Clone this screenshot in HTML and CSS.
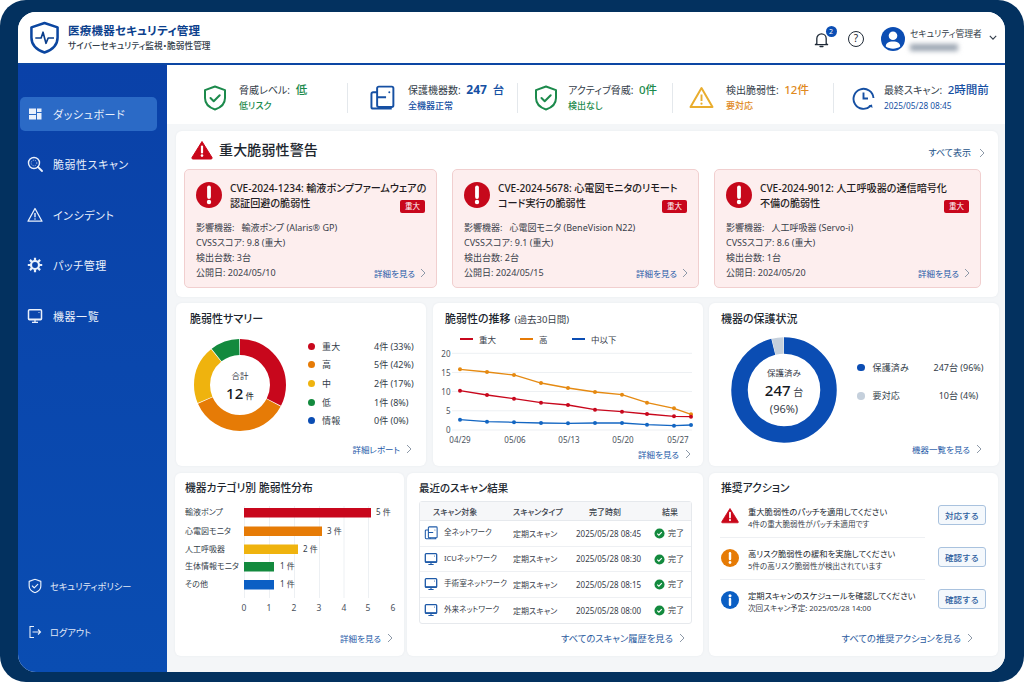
FILE: index.html
```html
<!DOCTYPE html>
<html lang="ja">
<head>
<meta charset="utf-8">
<title>医療機器セキュリティ管理</title>
<link rel="stylesheet" href="styles.css">
</head>
<body>
<svg class="defs" width="0" height="0">
  <defs>
    <symbol id="chev" viewBox="0 0 8 10"><path d="M2 1l4 4-4 4" fill="none" stroke="#8d99a8" stroke-width="1"/></symbol>
    <symbol id="shield-ok" viewBox="0 0 24 26"><path d="M12 1.500l10 3.600v8c0 5.800-4.200 9.600-10 11.400C6.200 22.700 2 18.900 2 13.100V5.100z" fill="none" stroke="currentColor" stroke-width="2" stroke-linejoin="round"/><path d="M7.500 13l3.200 3.200 6-6" fill="none" stroke="currentColor" stroke-width="2" stroke-linecap="round" stroke-linejoin="round"/></symbol>
    <symbol id="monitor" viewBox="0 0 16 16"><rect x="1.500" y="1.800" width="13" height="10" rx="1" fill="none" stroke="currentColor" stroke-width="1.500"/><path d="M2 10.500h12v1.500H2z" fill="currentColor"/><path d="M5 14.300h6M8 12v2" stroke="currentColor" stroke-width="1.300"/><circle cx="12" cy="4.500" r=".6" fill="currentColor"/></symbol>
    <symbol id="devices" viewBox="0 0 16 16"><rect x="5" y="1" width="10" height="12.500" rx="1" fill="none" stroke="currentColor" stroke-width="1.200"/><path d="M5 4.500H2.500a1 1 0 0 0-1 1v8a1 1 0 0 0 1 1h11.500M5 7.500h5.500M7 14.500v-1M13 14.500v-1" fill="none" stroke="currentColor" stroke-width="1.200"/><circle cx="12.500" cy="4.500" r=".6" fill="currentColor"/></symbol>
    <symbol id="done" viewBox="0 0 12 12"><circle cx="6" cy="6" r="5.500" fill="#138a3e"/><path d="M3.500 6.200l1.800 1.700 3.200-3.400" fill="none" stroke="#fff" stroke-width="1.200"/></symbol>
    <symbol id="tri-red" viewBox="0 0 22 20"><path d="M11 1.500L21 17.500a1.100 1.100 0 0 1-1 1.500H2a1.100 1.100 0 0 1-1-1.500z" fill="#c9071a" stroke="#c9071a" stroke-linejoin="round"/><path d="M11 6.500v6" stroke="#fff" stroke-width="2.200" stroke-linecap="round"/><circle cx="11" cy="15.600" r="1.300" fill="#fff"/></symbol>
    <symbol id="alert-circle" viewBox="0 0 26 26"><circle cx="13" cy="13" r="13" fill="#c6081b"/><path d="M13 5.500v9.500" stroke="#fff" stroke-width="3.800" stroke-linecap="round"/><circle cx="13" cy="20" r="2.200" fill="#fff"/></symbol>
  </defs>
</svg>
<div class="frame">
  <div class="app">
    <header class="topbar">
      <div class="brand">
        <svg class="logo" viewBox="0 0 32 34" width="31" height="33"><path d="M16 2l13.500 4.500v10.500c0 7.500-5.500 12.800-13.500 15.500C8 29.800 2.500 24.500 2.500 17V6.500z" fill="#fff" stroke="#0b46a0" stroke-width="2.600" stroke-linejoin="round"/><path d="M6.500 17.500h6l2-6 3 11.500 2.300-5.500h6" fill="none" stroke="#0b3f8c" stroke-width="1.700" stroke-linejoin="round"/></svg>
        <div>
          <div class="brand-title">医療機器セキュリティ管理</div>
          <div class="brand-sub">サイバーセキュリティ監視・脆弱性管理</div>
        </div>
      </div>
      <div class="top-tools">
        <div class="bell">
          <svg viewBox="0 0 16 18" width="15" height="17"><path d="M3 13.500V8a5 5 0 0 1 10 0v5.500l1.500 1H1.500z" fill="none" stroke="#1f2a37" stroke-width="1.400" stroke-linejoin="round"/><path d="M6.500 16.500h3" stroke="#1f2a37" stroke-width="1.500" stroke-linecap="round"/></svg>
          <span class="badge-num">2</span>
        </div>
        <div class="help">?</div>
        <svg class="avatar" viewBox="0 0 24 24" width="24" height="24"><circle cx="12" cy="12" r="12" fill="#0b4db3"/><circle cx="12" cy="8.800" r="4.300" fill="#fff"/><path d="M4.800 19.500c0-3.300 2.600-5 7.200-5s7.200 1.700 7.200 5c-2 1.400-4.500 2.200-7.200 2.200s-5.200-.8-7.200-2.200z" fill="#fff"/></svg>
        <div class="user">
          <div class="user-name">セキュリティ管理者</div>
          <div class="user-blur"></div>
        </div>
        <svg class="caret" viewBox="0 0 10 6" width="8" height="5"><path d="M1 1l4 4 4-4" fill="none" stroke="#333d4a" stroke-width="1.400"/></svg>
      </div>
    </header>
    <div class="body">
      <aside class="sidebar">
        <nav class="nav">
          <a class="nav-item active">
            <svg class="nav-icon" viewBox="0 0 16 16"><path d="M2 2.500h7v5.500H2zM10 2.500h4.500v3.500H10zM10 7h4.500v6.500H10zM2 9h7v4.500H2z" fill="#e9f0fb"/></svg>
            <span>ダッシュボード</span>
          </a>
          <a class="nav-item">
            <svg class="nav-icon" viewBox="0 0 16 16"><circle cx="7" cy="7" r="5.500" fill="none" stroke="#e9f0fb" stroke-width="1.400"/><path d="M11 11l4 4" stroke="#e9f0fb" stroke-width="1.800" stroke-linecap="round"/><circle cx="7" cy="7" r="2.800" fill="none" stroke="#e9f0fb" stroke-width=".7" stroke-dasharray="1 1"/></svg>
            <span>脆弱性スキャン</span>
          </a>
          <a class="nav-item">
            <svg class="nav-icon" viewBox="0 0 16 16"><path d="M8 1.500L15 14.200H1z" fill="none" stroke="#e9f0fb" stroke-width="1.300" stroke-linejoin="round"/><path d="M8 6v4.200" stroke="#e9f0fb" stroke-width="1.400"/><circle cx="8" cy="12" r=".8" fill="#e9f0fb"/></svg>
            <span>インシデント</span>
          </a>
          <a class="nav-item">
            <svg class="nav-icon" viewBox="0 0 16 16"><circle cx="8" cy="8" r="4" fill="none" stroke="#e9f0fb" stroke-width="2.200"/><path d="M8 .8v3M8 12.200v3M.8 8h3M12.200 8h3M2.900 2.900L5 5M11 11l2.100 2.100M13.100 2.900L11 5M5 11l-2.100 2.100" stroke="#e9f0fb" stroke-width="2.200"/></svg>
            <span>パッチ管理</span>
          </a>
          <a class="nav-item">
            <svg class="nav-icon" viewBox="0 0 16 16"><use href="#monitor" class="nav-use"/></svg>
            <span>機器一覧</span>
          </a>
        </nav>
        <div class="side-foot">
          <a class="foot-item">
            <svg class="foot-icon" viewBox="0 0 24 26"><use href="#shield-ok" class="nav-use"/></svg>
            <span>セキュリティポリシー</span>
          </a>
          <a class="foot-item">
            <svg class="foot-icon" viewBox="0 0 14 14"><path d="M6 1.500H2v11h4" fill="none" stroke="#e9f0fb" stroke-width="1.100"/><path d="M4.500 7h8M10 4.500L12.500 7 10 9.500" fill="none" stroke="#e9f0fb" stroke-width="1.100"/></svg>
            <span>ログアウト</span>
          </a>
        </div>
      </aside>
      <main class="main">
        <section class="stats">
          <div class="stat s1">
            <svg class="stat-icon green" width="24" height="26"><use href="#shield-ok"/></svg>
            <div><div class="stat-line">脅威レベル: <b class="green">低</b></div><div class="stat-sub green">低リスク</div></div>
          </div>
          <div class="stat s2">
            <svg class="stat-icon blue" width="26" height="26" viewBox="0 0 16 16"><use href="#devices"/></svg>
            <div><div class="stat-line">保護機器数: <b class="blue big">247</b><b class="blue"> 台</b></div><div class="stat-sub blue">全機器正常</div></div>
          </div>
          <div class="stat s3">
            <svg class="stat-icon green" width="24" height="26"><use href="#shield-ok"/></svg>
            <div><div class="stat-line">アクティブ脅威: <b class="green">0件</b></div><div class="stat-sub green">検出なし</div></div>
          </div>
          <div class="stat s4">
            <svg class="stat-icon" width="25" height="23" viewBox="0 0 25 23"><path d="M12.500 2L23.500 21H1.500z" fill="none" stroke="#e9ad2e" stroke-width="2" stroke-linejoin="round"/><path d="M12.500 8.500v6.500" stroke="#e9ad2e" stroke-width="1.900"/><circle cx="12.500" cy="17.700" r="1.100" fill="#e9ad2e"/></svg>
            <div><div class="stat-line">検出脆弱性: <b class="orange">12件</b></div><div class="stat-sub orange">要対応</div></div>
          </div>
          <div class="stat s5">
            <svg class="stat-icon blue" width="23" height="24" viewBox="0 0 23 24"><path d="M18.500 20A10 10 0 1 1 21.500 12" fill="none" stroke="currentColor" stroke-width="1.900"/><path d="M11.500 6.500v6h4.500" fill="none" stroke="currentColor" stroke-width="1.900"/><path d="M16.500 19.500l3.500-1 .5 3.500z" fill="currentColor"/></svg>
            <div><div class="stat-line">最終スキャン: <b class="blue">2時間前</b></div><div class="stat-sub blue regular">2025/05/28 08:45</div></div>
          </div>
        </section>
        <div class="content">
          <section class="card alerts">
            <div class="alerts-head">
              <svg width="22" height="20"><use href="#tri-red"/></svg>
              <h2>重大脆弱性警告</h2>
              <a class="link all">すべて表示<svg width="8" height="10"><use href="#chev"/></svg></a>
            </div>
            <div class="alert-grid">
              <article class="alert">
                <div class="alert-top">
                  <svg width="26" height="26"><use href="#alert-circle"/></svg>
                  <h3>CVE-2024-1234: 輸液ポンプファームウェアの<br>認証回避の脆弱性</h3>
                  <span class="sev">重大</span>
                </div>
                <p class="gap">影響機器:&nbsp;&nbsp;&nbsp;輸液ポンプ (Alaris® GP)</p>
                <p>CVSSスコア: 9.8 (重大)</p>
                <p>検出台数: 3台</p>
                <div class="alert-last"><p>公開日: 2024/05/10</p><a class="link">詳細を見る<svg width="8" height="10"><use href="#chev"/></svg></a></div>
              </article>
              <article class="alert">
                <div class="alert-top">
                  <svg width="26" height="26"><use href="#alert-circle"/></svg>
                  <h3>CVE-2024-5678: 心電図モニタのリモート<br>コード実行の脆弱性</h3>
                  <span class="sev">重大</span>
                </div>
                <p class="gap">影響機器:&nbsp;&nbsp;&nbsp;心電図モニタ (BeneVision N22)</p>
                <p>CVSSスコア: 9.1 (重大)</p>
                <p>検出台数: 2台</p>
                <div class="alert-last"><p>公開日: 2024/05/15</p><a class="link">詳細を見る<svg width="8" height="10"><use href="#chev"/></svg></a></div>
              </article>
              <article class="alert">
                <div class="alert-top">
                  <svg width="26" height="26"><use href="#alert-circle"/></svg>
                  <h3>CVE-2024-9012: 人工呼吸器の通信暗号化<br>不備の脆弱性</h3>
                  <span class="sev">重大</span>
                </div>
                <p class="gap">影響機器:&nbsp;&nbsp;&nbsp;人工呼吸器 (Servo-i)</p>
                <p>CVSSスコア: 8.6 (重大)</p>
                <p>検出台数: 1台</p>
                <div class="alert-last"><p>公開日: 2024/05/20</p><a class="link">詳細を見る<svg width="8" height="10"><use href="#chev"/></svg></a></div>
              </article>
            </div>
          </section>

          <div class="row row2">
            <section class="card panel">
              <h2 class="panel-title">脆弱性サマリー</h2>
              <div class="summary">
                <svg class="donut" viewBox="0 0 92 92" width="92" height="92">
                  <g fill="none" stroke-width="16" transform="rotate(-90 46 46)">
                    <circle cx="46" cy="46" r="38" pathLength="360" stroke="#c8071c" stroke-dasharray="117 243"/>
                    <circle cx="46" cy="46" r="38" pathLength="360" stroke="#e67b06" stroke-dasharray="128 232" stroke-dashoffset="-118"/>
                    <circle cx="46" cy="46" r="38" pathLength="360" stroke="#efb30e" stroke-dasharray="74 286" stroke-dashoffset="-247"/>
                    <circle cx="46" cy="46" r="38" pathLength="360" stroke="#138a3e" stroke-dasharray="37 323" stroke-dashoffset="-322"/>
                  </g>
                  <text x="46" y="40" class="d-small" text-anchor="middle">合計</text>
                  <text x="46" y="60" class="d-big" text-anchor="middle">12<tspan class="d-unit"> 件</tspan></text>
                </svg>
                <ul class="legend">
                  <li><i class="dot c-red"></i><span>重大</span><em>4件 (33%)</em></li>
                  <li><i class="dot c-orange"></i><span>高</span><em>5件 (42%)</em></li>
                  <li><i class="dot c-yellow"></i><span>中</span><em>2件 (17%)</em></li>
                  <li><i class="dot c-green"></i><span>低</span><em>1件 (8%)</em></li>
                  <li><i class="dot c-blue"></i><span>情報</span><em>0件 (0%)</em></li>
                </ul>
              </div>
              <a class="link foot f-summary">詳細レポート<svg width="8" height="10"><use href="#chev"/></svg></a>
            </section>

            <section class="card panel trend">
              <h2 class="panel-title">脆弱性の推移<small>(過去30日間)</small></h2>
              <div class="line-legend">
                <span><i class="swatch c-red"></i>重大</span>
                <span><i class="swatch c-orange"></i>高</span>
                <span><i class="swatch c-blue"></i>中以下</span>
              </div>
              <svg class="linechart" viewBox="0 0 250 96" width="250" height="96">
                <g class="grid-lines"><path d="M14 3.300H254M14 22.500H254M14 41.500H254M14 60.800H254M14 80H254"/></g>
                <g class="axis-text">
                  <text x="12.500" y="6.500" text-anchor="end">20</text><text x="12.500" y="25.500" text-anchor="end">15</text><text x="12.500" y="44.500" text-anchor="end">10</text><text x="12.500" y="64" text-anchor="end">5</text><text x="12.500" y="83" text-anchor="end">0</text>
                  <text x="22" y="93" text-anchor="middle">04/29</text><text x="77" y="93" text-anchor="middle">05/06</text><text x="131" y="93" text-anchor="middle">05/13</text><text x="185" y="93" text-anchor="middle">05/20</text><text x="240" y="93" text-anchor="middle">05/27</text>
                </g>
                <g fill="none" stroke-width="1.300">
                  <polyline stroke="#e58a12" points="22,19.300 49,22 76,25 103,33 130,38 157,42 184,44.700 209,52.700 236,58.300 253,64.300"/>
                  <polyline stroke="#c8071c" points="22,40.700 49,45 76,48.700 103,52.700 130,55 157,59.700 184,61.700 209,64 236,66.300 253,66.700"/>
                  <polyline stroke="#1366c2" points="22,69.700 49,71.700 76,72.300 103,73 130,73.300 157,73 184,73 209,74.700 236,75.700 253,75"/>
                </g>
                <g fill="#e58a12"><circle cx="22" cy="19.300" r="2"/><circle cx="49" cy="22" r="2"/><circle cx="76" cy="25" r="2"/><circle cx="103" cy="33" r="2"/><circle cx="130" cy="38" r="2"/><circle cx="157" cy="42" r="2"/><circle cx="184" cy="44.700" r="2"/><circle cx="209" cy="52.700" r="2"/><circle cx="236" cy="58.300" r="2"/><circle cx="253" cy="64.300" r="2"/></g>
                <g fill="#c8071c"><circle cx="22" cy="40.700" r="2"/><circle cx="49" cy="45" r="2"/><circle cx="76" cy="48.700" r="2"/><circle cx="103" cy="52.700" r="2"/><circle cx="130" cy="55" r="2"/><circle cx="157" cy="59.700" r="2"/><circle cx="184" cy="61.700" r="2"/><circle cx="209" cy="64" r="2"/><circle cx="236" cy="66.300" r="2"/><circle cx="253" cy="66.700" r="2"/></g>
                <g fill="#1366c2"><circle cx="22" cy="69.700" r="2"/><circle cx="49" cy="71.700" r="2"/><circle cx="76" cy="72.300" r="2"/><circle cx="103" cy="73" r="2"/><circle cx="130" cy="73.300" r="2"/><circle cx="157" cy="73" r="2"/><circle cx="184" cy="73" r="2"/><circle cx="209" cy="74.700" r="2"/><circle cx="236" cy="75.700" r="2"/><circle cx="253" cy="75" r="2"/></g>
              </svg>
              <a class="link foot tight">詳細を見る<svg width="8" height="10"><use href="#chev"/></svg></a>
            </section>

            <section class="card panel guard">
              <h2 class="panel-title">機器の保護状況</h2>
              <div class="protect">
                <svg class="donut" viewBox="0 0 106 106" width="106" height="106">
                  <g fill="none" stroke-width="16.500" transform="rotate(-90 53 53)">
                    <circle cx="53" cy="53" r="44.500" pathLength="360" stroke="#0b4db3" stroke-dasharray="346 14"/>
                    <circle cx="53" cy="53" r="44.500" pathLength="360" stroke="#c5d0dc" stroke-dasharray="13 347" stroke-dashoffset="-346.500"/>
                  </g>
                  <text x="53" y="39" class="d-small" text-anchor="middle">保護済み</text>
                  <text x="53" y="59" class="d-big" text-anchor="middle">247<tspan class="d-unit2"> 台</tspan></text>
                  <text x="53" y="76" class="d-pct" text-anchor="middle">(96%)</text>
                </svg>
                <ul class="legend wide">
                  <li><i class="dot c-blue"></i><span>保護済み</span><em>247台 (96%)</em></li>
                  <li><i class="dot c-gray"></i><span>要対応</span><em>10台 (4%)</em></li>
                </ul>
              </div>
              <a class="link foot tight2">機器一覧を見る<svg width="8" height="10"><use href="#chev"/></svg></a>
            </section>
          </div>

          <div class="row row3">
            <section class="card panel p3">
              <h2 class="panel-title">機器カテゴリ別 脆弱性分布</h2>
              <svg class="barchart" viewBox="0 0 215 115" width="215" height="115">
                <path class="grid-lines" d="M59.500 0v92M84.500 0v92M109.500 0v92M134.500 0v92M159 0v92M183.500 0v92"/>
                <g class="bar-label">
                  <text x="0" y="9">輸液ポンプ</text><text x="0" y="28">心電図モニタ</text><text x="0" y="46">人工呼吸器</text><text x="0" y="63">生体情報モニタ</text><text x="0" y="81">その他</text>
                </g>
                <rect x="59" y="2" width="127" height="9.500" fill="#c8071c"/>
                <rect x="59" y="20.500" width="78" height="9.500" fill="#e67b06"/>
                <rect x="59" y="38.500" width="54" height="9.500" fill="#efb30e"/>
                <rect x="59" y="56" width="30" height="9.500" fill="#138a3e"/>
                <rect x="59" y="74" width="30" height="9.500" fill="#0b5fc4"/>
                <g class="bar-label">
                  <text x="191" y="9">5 件</text><text x="142" y="28">3 件</text><text x="118" y="46">2 件</text><text x="95" y="63">1 件</text><text x="95" y="81">1 件</text>
                </g>
                <g class="axis-text big-axis">
                  <text x="59" y="105" text-anchor="middle">0</text><text x="84" y="105" text-anchor="middle">1</text><text x="109" y="105" text-anchor="middle">2</text><text x="134" y="105" text-anchor="middle">3</text><text x="159" y="105" text-anchor="middle">4</text><text x="183" y="105" text-anchor="middle">5</text><text x="208" y="105" text-anchor="middle">6</text>
                </g>
              </svg>
              <a class="link foot mid">詳細を見る<svg width="8" height="10"><use href="#chev"/></svg></a>
            </section>

            <section class="card panel p3 scan-panel">
              <h2 class="panel-title">最近のスキャン結果</h2>
              <table class="scan">
                <thead><tr><th>スキャン対象</th><th>スキャンタイプ</th><th>完了時刻</th><th>結果</th></tr></thead>
                <tbody>
                  <tr><td class="target"><svg width="14" height="14" viewBox="0 0 16 16"><use href="#devices"/></svg>全ネットワーク</td><td>定期スキャン</td><td>2025/05/28 08:45</td><td class="res"><svg width="11" height="11"><use href="#done"/></svg>完了</td></tr>
                  <tr><td class="target"><svg width="14" height="14" viewBox="0 0 16 16"><use href="#monitor"/></svg>ICUネットワーク</td><td>定期スキャン</td><td>2025/05/28 08:30</td><td class="res"><svg width="11" height="11"><use href="#done"/></svg>完了</td></tr>
                  <tr><td class="target"><svg width="14" height="14" viewBox="0 0 16 16"><use href="#monitor"/></svg>手術室ネットワーク</td><td>定期スキャン</td><td>2025/05/28 08:15</td><td class="res"><svg width="11" height="11"><use href="#done"/></svg>完了</td></tr>
                  <tr><td class="target"><svg width="14" height="14" viewBox="0 0 16 16"><use href="#monitor"/></svg>外来ネットワーク</td><td>定期スキャン</td><td>2025/05/28 08:00</td><td class="res"><svg width="11" height="11"><use href="#done"/></svg>完了</td></tr>
                </tbody>
              </table>
              <a class="link foot scan-link">すべてのスキャン履歴を見る<svg width="8" height="10"><use href="#chev"/></svg></a>
            </section>

            <section class="card panel p3 act-panel">
              <h2 class="panel-title">推奨アクション</h2>
              <ul class="actions">
                <li>
                  <svg width="18" height="17" viewBox="0 0 22 20"><use href="#tri-red"/></svg>
                  <div class="act-text"><strong>重大脆弱性のパッチを適用してください</strong><span>4件の重大脆弱性がパッチ未適用です</span></div>
                  <button class="btn">対応する</button>
                </li>
                <li>
                  <svg width="18" height="18" viewBox="0 0 26 26"><circle cx="13" cy="13" r="13" fill="#e67b06"/><path d="M13 6v8.500" stroke="#fff" stroke-width="3.500" stroke-linecap="round"/><circle cx="13" cy="19.500" r="2" fill="#fff"/></svg>
                  <div class="act-text"><strong>高リスク脆弱性の緩和を実施してください</strong><span>5件の高リスク脆弱性が検出されています</span></div>
                  <button class="btn">確認する</button>
                </li>
                <li>
                  <svg width="18" height="18" viewBox="0 0 26 26"><circle cx="13" cy="13" r="13" fill="#0b5fc4"/><circle cx="13" cy="7" r="2.200" fill="#fff"/><path d="M13 11.500V20" stroke="#fff" stroke-width="3.500" stroke-linecap="round"/></svg>
                  <div class="act-text"><strong>定期スキャンのスケジュールを確認してください</strong><span>次回スキャン予定: 2025/05/28 14:00</span></div>
                  <button class="btn">確認する</button>
                </li>
              </ul>
              <a class="link foot act-link">すべての推奨アクションを見る<svg width="8" height="10"><use href="#chev"/></svg></a>
            </section>
          </div>
        </div>
      </main>
    </div>
  </div>
</div>
</body>
</html>
```

FILE: styles.css
```css
* { box-sizing: border-box; }
html, body { margin: 0; padding: 0; }
body {
  width: 1024px;
  height: 682px;
  overflow: hidden;
  background: #fff;
  font-family: "Noto Sans", "Noto Sans CJK JP", sans-serif;
  font-feature-settings: "palt";
  color: #20262e;
}
h2, h3, p, ul { margin: 0; padding: 0; }
ul { list-style: none; }
.defs { display: block; height: 0; width: 0; overflow: hidden; }

.frame {
  width: 1024px;
  height: 682px;
  padding: 12px 19px 10px 18px;
  background: #03315f;
  border-radius: 26px;
}
.app {
  height: 100%;
  border-radius: 18px;
  overflow: hidden;
  background: #fff;
  display: flex;
  flex-direction: column;
}

/* top bar */
.topbar {
  height: 53px;
  flex: none;
  display: flex;
  align-items: center;
  justify-content: space-between;
  background: #fff;
  border-bottom: 2px solid #0c46a3;
  padding: 0 8px 0 11px;
}
.brand { display: flex; align-items: center; gap: 8px; }
.logo { display: block; }
.brand-title { font-size: 11.500px; font-weight: 700; color: #0c3f8d; line-height: 15px; letter-spacing: .02em; }
.brand-sub { font-size: 8.700px; font-weight: 500; color: #333d49; line-height: 12px; margin-top: 2px; }
.top-tools { display: flex; align-items: center; padding-top: 3px; }
.bell { position: relative; width: 15px; height: 17px; margin-right: 19.500px; }
.bell svg { display: block; }
.badge-num {
  position: absolute;
  top: -5px;
  left: 12px;
  width: 11px;
  height: 11px;
  border-radius: 50%;
  background: #0b4db3;
  color: #fff;
  font-size: 7px;
  line-height: 11px;
  text-align: center;
}
.help {
  width: 16px;
  height: 16px;
  border: 1.300px solid #1f2a37;
  border-radius: 50%;
  font-size: 10px;
  line-height: 13.500px;
  text-align: center;
  margin-right: 17px;
}
.avatar { display: block; margin-right: 5px; }
.user { width: 79px; }
.user-name { font-size: 8.800px; line-height: 12px; color: #333d49; }
.user-blur { width: 48px; height: 7px; margin-top: 4px; background: #9aa4b1; filter: blur(2.500px); }
.caret { display: block; margin-top: -4px; }

/* sidebar */
.body { flex: 1; display: flex; min-height: 0; }
.sidebar {
  width: 149px;
  flex: none;
  background: linear-gradient(180deg, #0a41a8 0%, #0a4db2 100%);
  display: flex;
  flex-direction: column;
  justify-content: space-between;
  padding: 32px 10px 0 2px;
}
.nav { display: flex; flex-direction: column; gap: 16.400px; }
.nav-item {
  height: 34px;
  display: flex;
  align-items: center;
  gap: 10px;
  padding-left: 7px;
  border-radius: 5px;
  color: #e9f0fb;
  font-size: 11px;
  letter-spacing: .05em;
}
.nav-item.active { background: #2b6ac6; }
.nav-icon { width: 16px; height: 16px; flex: none; }
.nav-use { color: #e9f0fb; }
.side-foot { display: flex; flex-direction: column; gap: 26px; padding-bottom: 30px; }
.foot-item {
  height: 20px;
  display: flex;
  align-items: center;
  gap: 8px;
  padding-left: 8px;
  color: #e2eaf7;
  font-size: 9.200px;
}
.foot-icon { width: 14px; height: 16px; flex: none; }

/* main */
.main { flex: 1; min-width: 0; background: #f4f6f8; display: flex; flex-direction: column; }
.stats {
  height: 59px;
  flex: none;
  display: flex;
  align-items: center;
  background: #fff;
  padding-top: 6px;
}
.stat { height: 30px; display: flex; align-items: center; flex: none; border-right: 1px solid #e4e8ec; }
.stat.s1 { width: 181px; padding-left: 36px; gap: 12px; }
.stat.s2 { width: 170px; padding-left: 21px; gap: 13px; }
.stat.s3 { width: 155px; padding-left: 16px; gap: 10px; }
.stat.s4 { width: 161px; padding-left: 16px; gap: 12px; }
.stat.s5 { flex: 1; border-right: 0; padding-left: 18px; gap: 9px; }
.stat-icon { display: block; flex: none; }
.stat-line { font-size: 10px; line-height: 14px; color: #333d49; white-space: nowrap; }
.stat-line b { font-size: 11.500px; font-weight: 500; margin-left: 3px; }
.stat-line b.big { font-size: 12px; font-weight: 700; }
.stat-sub { font-size: 9px; line-height: 12px; margin-top: 3px; font-weight: 500; white-space: nowrap; }
.stat-sub.regular { font-weight: 400; font-size: 8.300px; }
.green { color: #1c8a4c; }
.blue { color: #1650a3; }
.orange { color: #e08a1e; }

.content { padding: 7px 7px 0 9px; display: flex; flex-direction: column; gap: 6px; }
.card { background: #fff; border-radius: 6px; box-shadow: 0 0 3px rgba(30, 50, 80, .05); }

/* alerts */
.alerts { height: 166px; padding: 0 8px; }
.alerts-head { height: 38px; display: flex; align-items: center; padding: 0 4px 0 7px; }
.alerts-head svg { display: block; }
.alerts-head h2 { font-size: 14px; font-weight: 500; line-height: 20px; margin-left: 6px; letter-spacing: .01em; }
.link { display: inline-flex; align-items: center; gap: 5px; font-size: 8.500px; color: #1e5aa8; white-space: nowrap; }
.link.all { margin-left: auto; color: #245389; gap: 7px; padding-top: 5px; font-size: 9px; }
.alert-grid { display: grid; grid-template-columns: 253px 247px 267px; column-gap: 15px; }
.alert {
  height: 119px;
  background: #fdeeee;
  border: 1px solid #f1cfcf;
  border-radius: 5px;
  padding: 11px 10px 0 11px;
  position: relative;
}
.alert-top { display: flex; gap: 8px; height: 36px; }
.alert-top svg { flex: none; display: block; margin-top: 1px; }
.alert h3 { font-size: 10.100px; line-height: 15px; font-weight: 500; color: #1f1c22; white-space: nowrap; }
.sev {
  position: absolute;
  right: 11px;
  top: 30px;
  width: 25px;
  height: 13px;
  border-radius: 2px;
  background: #c8071c;
  color: #fff;
  font-size: 7.500px;
  line-height: 13px;
  text-align: center;
}
.alert p { font-size: 9px; line-height: 15px; color: #39404a; white-space: nowrap; }
.alert p.gap { margin-top: 3px; }
.alert-last { display: flex; justify-content: space-between; align-items: center; }
.alert-last .link { margin-right: -1px; gap: 4px; }

/* panels */
.row { display: grid; }
.row2 { height: 163px; grid-template-columns: 250px 270px 289px; column-gap: 7px; }
.row2 > :nth-child(3) { margin-left: -1px; }
.row3 { height: 183px; grid-template-columns: 229px 296px 289px; column-gap: 3px; margin: 1px 0 0 -1px; }
.row3 > :nth-child(3) { margin-left: 3px; width: 289px; }
.panel { padding: 0 14px; position: relative; display: flex; flex-direction: column; }
.panel-title { font-size: 11px; font-weight: 500; line-height: 14px; padding-top: 9px; height: 29px; color: #20262e; white-space: nowrap; }
.panel-title small { font-size: 9.500px; font-weight: 400; margin-left: 4px; color: #39404a; }
.trend { padding: 0 13px; }
.trend .panel-title { margin-left: -1px; }
.guard { padding: 0 13px; }
.guard .panel-title { margin-left: -1px; }
.foot { margin-top: auto; align-self: flex-end; padding-bottom: 11px; }
.foot.f-summary { margin-right: -1px; }

.summary { display: flex; margin-top: 7px; padding-left: 4px; }
.donut { display: block; flex: none; }
.d-small { font-size: 8.500px; fill: #39404a; }
.d-big { font-size: 15px; font-weight: 500; fill: #14181d; }
.d-unit { font-size: 8.500px; font-weight: 400; }
.d-unit2 { font-size: 10px; font-weight: 400; fill: #39404a; }
.d-pct { font-size: 11px; fill: #39404a; }
.legend { margin: -2px 0 0 21.500px; width: 110px; }
.legend li { display: flex; align-items: center; height: 18.600px; font-size: 9px; color: #333d49; }
.legend .dot { width: 7px; height: 7px; border-radius: 50%; flex: none; margin-right: 7.500px; }
.legend span { width: 52px; flex: none; letter-spacing: .02em; }
.legend em { font-style: normal; white-space: nowrap; }
.legend.wide { margin: 0 0 0 20px; width: 135px; padding-top: 16px; }
.legend.wide li { height: 28.500px; }
.legend.wide .dot { width: 7.500px; height: 7.500px; margin-right: 8px; }
.legend.wide span { width: 53px; }
.legend.wide em { width: 66px; text-align: center; }
.c-red { background: #c8071c; }
.c-orange { background: #e67b06; }
.c-yellow { background: #efb30e; }
.c-green { background: #138a3e; }
.c-blue { background: #0b4db3; }
.c-gray { background: #c5d0dc; }
.protect { display: flex; margin-top: 5px; padding-left: 9px; }

.line-legend { display: flex; font-size: 8.500px; color: #39404a; padding-left: 14px; height: 13px; align-items: center; }
.line-legend span { display: flex; align-items: center; gap: 6px; white-space: nowrap; width: 52px; }
.line-legend span:first-child { width: 60px; }
.swatch { width: 13px; height: 2px; display: block; }
.linechart { display: block; margin: 5px 0 0 -8px; overflow: visible; }
.grid-lines { stroke: #edf0f3; stroke-width: 1; fill: none; }
.axis-text { font-size: 8px; fill: #4a525d; }
.big-axis { font-size: 8.500px; }
.bar-label { font-size: 8px; fill: #333d49; }
.foot.tight { padding-bottom: 6px; margin-right: -2px; }
.foot.tight2 { padding-bottom: 11px; margin-right: 3px; }
.p3 .panel-title { padding-top: 8px; height: 30px; font-size: 10.800px; }
.p3 { padding: 0 10px; }
.barchart { display: block; margin-top: 3px; overflow: visible; }
.foot.mid { padding-bottom: 12px; margin-right: 0; }

/* table */
.scan-panel .panel-title { margin-left: 2px; font-size: 10.500px; }
.scan {
  width: 273px;
  margin: -2px 0 0 2px;
  border: 1px solid #e6e9ed;
  border-radius: 3px;
  border-collapse: separate;
  border-spacing: 0;
  table-layout: fixed;
  font-size: 8px;
  color: #39404a;
}
.scan th { height: 19px; background: #f6f7f9; font-weight: 500; font-size: 8px; border-bottom: 1px solid #e6e9ed; text-align: left; padding: 0; white-space: nowrap; }
.scan td { height: 25.500px; border-bottom: 1px solid #eef0f3; padding: 0; white-space: nowrap; }
.scan tr:last-child td { border-bottom: 0; }
.scan th:nth-child(1), .scan td:nth-child(1) { width: 93px; }
.scan th:nth-child(2), .scan td:nth-child(2) { width: 63px; }
.scan th:nth-child(3), .scan td:nth-child(3) { width: 78px; }
.scan th:nth-child(1) { padding-left: 13px; }
.scan th:nth-child(3) { padding-left: 13px; }
.scan th:nth-child(4) { padding-left: 8px; }
.scan td.target { padding-left: 4px; color: #39404a; font-size: 7.600px; }
.scan td.target svg { display: inline-block; vertical-align: middle; margin-right: 6px; color: #1e5aa8; }
.scan td.res { color: #39404a; }
.scan td.res svg { display: inline-block; vertical-align: middle; margin: 0 3px 0 0; }
.foot.scan-link { font-size: 9.300px; padding-bottom: 11px; margin-right: 7px; color: #2a5a9e; }

/* actions */
.act-panel .panel-title { margin-left: 2px; }
.actions { margin-top: -8px; }
.actions li {
  display: flex;
  align-items: flex-start;
  height: 42px;
  padding: 10px 0 0 2px;
  position: relative;
}
.actions li + li::before {
  content: "";
  position: absolute;
  left: 1px;
  top: 0;
  width: 205px;
  height: 1px;
  background: #eef0f3;
}
.actions li svg { flex: none; display: block; margin-top: 2px; }
.act-text { width: 190px; flex: none; margin-left: 9px; }
.act-text strong { display: block; font-size: 8.300px; font-weight: 400; line-height: 13px; color: #20262e; white-space: nowrap; }
.act-text span { display: block; font-size: 7.600px; line-height: 11px; margin-top: 1px; color: #39404a; white-space: nowrap; }
.btn {
  width: 48px;
  height: 20px;
  padding: 0;
  font: 500 8.500px "Noto Sans", "Noto Sans CJK JP", sans-serif;
  color: #2c5e9e;
  background: #f4f8fc;
  border: 1px solid #a9c2de;
  border-radius: 3px;
}
.foot.act-link { font-size: 9.300px; padding-bottom: 11px; margin-right: 14px; color: #2a5a9e; }
```
